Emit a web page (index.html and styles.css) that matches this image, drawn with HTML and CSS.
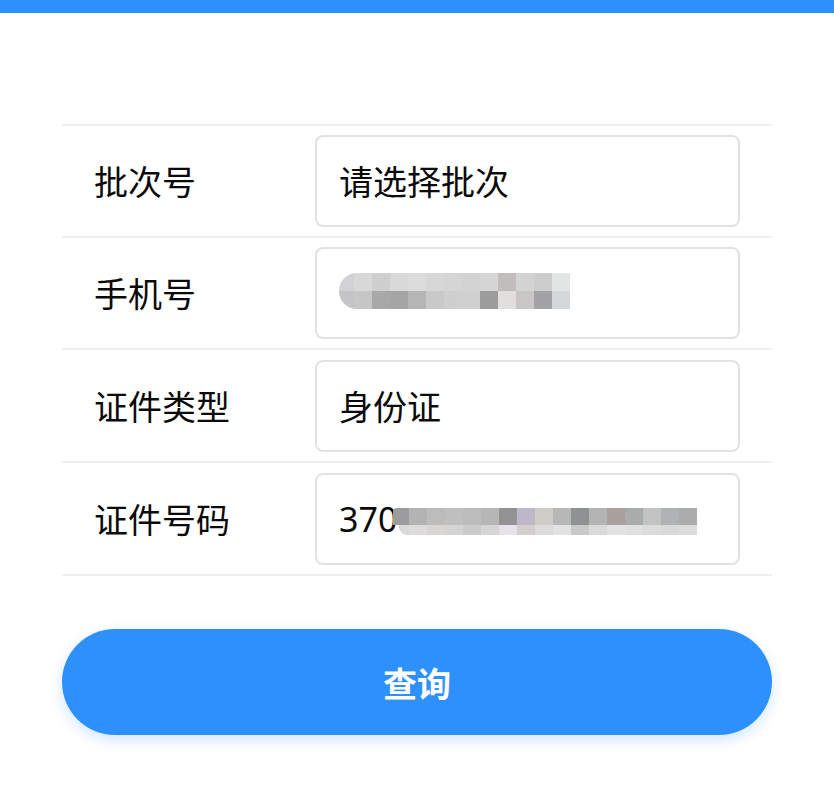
FILE: index.html
```html
<!DOCTYPE html>
<html lang="zh-CN">
<head>
<meta charset="utf-8">
<title>查询</title>
<link rel="stylesheet" href="styles.css">
</head>
<body>
<div class="topbar"></div>
<main class="page">
  <div class="form">
    <div class="row">
      <div class="label">批次号</div>
      <div class="field">请选择批次</div>
    </div>
    <div class="row">
      <div class="label">手机号</div>
      <div class="field">
        <div class="mosaic phone">
          <div class="m-row p1"></div>
          <div class="m-row p2"></div>
        </div>
      </div>
    </div>
    <div class="row">
      <div class="label">证件类型</div>
      <div class="field">身份证</div>
    </div>
    <div class="row">
      <div class="label">证件号码</div>
      <div class="field">
        <span class="num">370</span>
        <div class="mosaic idno">
          <div class="m-row i1"></div>
          <div class="m-row i2"></div>
        </div>
      </div>
    </div>
  </div>
  <button class="submit" type="button">查询</button>
</main>
</body>
</html>
```
FILE: styles.css
```css
html, body {
  margin: 0;
  padding: 0;
  background: #ffffff;
}
body {
  font-family: "Noto Sans CJK SC", "Noto Sans", sans-serif;
  color: #0a0a0a;
  width: 834px;
  height: 792px;
  overflow: hidden;
}
.topbar {
  height: 13px;
  background: #2b8ffd;
}
.page {
  margin: 111px 62px 0 62px;
}
.form {
  border-top: 2px solid #efefef;
}
.row {
  display: flex;
  align-items: center;
  padding: 9px 32px 9px 32px;
  border-bottom: 2px solid #efefef;
  height: 92px;
  box-sizing: content-box;
}
.row:nth-child(3),
.row:nth-child(4) {
  padding-top: 10px;
}
.label {
  width: 221px;
  flex: none;
  font-size: 34px;
  line-height: 1;
}
.field {
  flex: 1;
  height: 92px;
  box-sizing: border-box;
  border: 2px solid #e2e2e2;
  border-radius: 8px;
  padding-left: 22px;
  display: flex;
  align-items: center;
  font-size: 34px;
  line-height: 1;
}
.num {
  font-family: "Noto Sans", "Noto Sans CJK SC", sans-serif;
}
.mosaic {
  display: flex;
  flex-direction: column;
}
.phone {
  width: 231px;
  margin-top: -4px;
}
.phone .m-row {
  height: 18px;
}
.p1 {
  border-top-left-radius: 18px;
  background: linear-gradient(to right,
    #d2d2d4 0 15px, #d8d8d8 15px 33px, #cfcfcf 33px 51px, #d9d9d9 51px 69px,
    #dcdcdc 69px 87px, #d7d7d7 87px 105px, #d5d5d5 105px 123px, #d3d3d3 123px 141px,
    #d6d6d6 141px 159px, #c0bdbc 159px 177px, #d3d3d3 177px 195px, #cdcdcd 195px 213px,
    #e3e5e5 213px 231px);
}
.p2 {
  border-bottom-left-radius: 18px;
  background: linear-gradient(to right,
    #c4c4c6 0 15px, #c6c6c6 15px 33px, #a8a8a8 33px 51px, #a5a5a5 51px 69px,
    #b5b5b5 69px 87px, #c9c9c9 87px 105px, #cfcfcf 105px 123px, #d0d0d0 123px 141px,
    #9c9c9c 141px 159px, #e0dfdd 159px 177px, #c9c7c6 177px 195px, #a3a3a6 195px 213px,
    #d5d8db 213px 231px);
}
.idno {
  width: 304px;
  margin-top: 4px;
  margin-left: -4px;
}
.i1 {
  height: 17px;
  border-top-left-radius: 4px;
  background: linear-gradient(to right,
    #9b9c9e 0 16px, #b3b3b3 16px 34px, #bcbcbc 34px 52px, #bfbfbf 52px 70px,
    #bcbcbc 70px 88px, #b6b6b6 88px 106px, #939395 106px 124px, #bcb8c8 124px 142px,
    #d0ccc8 142px 160px, #b7b7b7 160px 178px, #8f9292 178px 196px, #b4b4b4 196px 214px,
    #aaa09e 214px 232px, #a8adac 232px 250px, #c3c3c3 250px 268px, #b0b3b3 268px 286px,
    #acacac 286px 304px);
}
.i2 {
  height: 10px;
  margin-left: 6px;
  border-bottom-left-radius: 8px;
  background: linear-gradient(to right,
    #d9d9d9 0 10px, #dcdcdc 10px 28px, #d8d5d2 28px 46px, #d4d4d4 46px 64px,
    #cbcbcb 64px 82px, #d5d5d5 82px 100px, #e6e1ea 100px 118px, #d2d0cd 118px 136px,
    #dcdcdc 136px 154px, #e2e2e2 154px 172px, #c9c9c9 172px 190px, #dadada 190px 208px,
    #e3e3e3 208px 226px, #e0e0e0 226px 244px, #dcdcdc 244px 262px, #d9d9d9 262px 280px,
    #dcdcdc 280px 298px);
}
.submit {
  display: block;
  width: 100%;
  height: 106px;
  margin-top: 53px;
  border: none;
  border-radius: 53px;
  background: #2e90fd;
  color: #ffffff;
  font-family: "Noto Sans CJK SC", sans-serif;
  font-size: 34px;
  font-weight: 700;
  box-shadow: 0 5px 14px rgba(46, 144, 253, 0.22);
  padding: 0;
}
```
